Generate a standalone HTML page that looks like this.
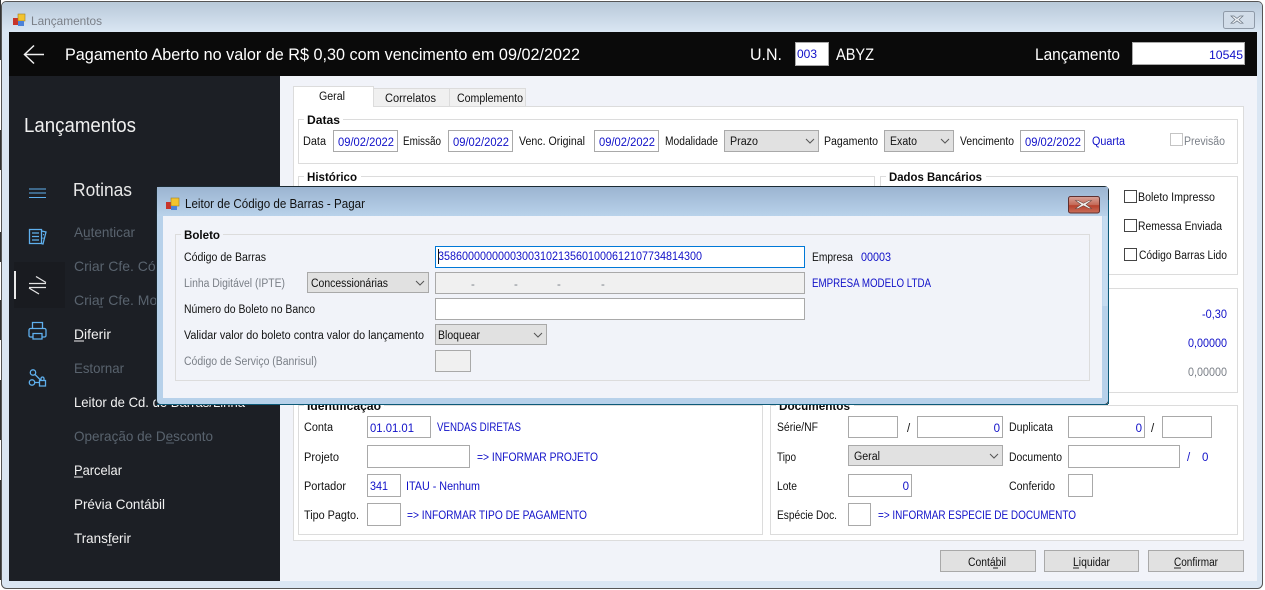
<!DOCTYPE html>
<html lang="pt-BR"><head><meta charset="utf-8"><title>Lançamentos</title>
<style>
html,body{margin:0;padding:0;width:1265px;height:590px;overflow:hidden;background:#fff}
svg{display:block}
text{font-family:"Liberation Sans",sans-serif;font-size:11.5px;fill:#111;white-space:pre}
.b{fill:#1010c8}
.g{fill:#7a7f87}
.l{font-weight:bold;font-size:12px;fill:#0a0a0a}
.w{fill:#f2f2f2;font-size:14px}
.d{fill:#59636e;font-size:14px}
.h{fill:#fff;font-size:16.5px}
.f{fill:#fff;stroke:#a9a9a9;stroke-width:1}
.c{fill:#e1e1e1;stroke:#a9a9a9;stroke-width:1}
.gb{fill:none;stroke:#dcdcdc;stroke-width:1}
.ic{fill:none;stroke:#5fb0ee;stroke-width:1.3}
.ar{fill:none;stroke:#555;stroke-width:1}
</style></head><body>
<svg width="1265" height="590" viewBox="0 0 1265 590" xmlns="http://www.w3.org/2000/svg">
<defs>
<linearGradient id="tg" x1="0" y1="0" x2="0" y2="1"><stop offset="0" stop-color="#b8c9d9"/><stop offset="1" stop-color="#dae6f3"/></linearGradient>
<linearGradient id="dg" x1="0" y1="0" x2="0" y2="1"><stop offset="0" stop-color="#9bb4d1"/><stop offset="1" stop-color="#b9d2ea"/></linearGradient>
<linearGradient id="rg" x1="0" y1="0" x2="0" y2="1"><stop offset="0" stop-color="#d9a49b"/><stop offset=".5" stop-color="#c46a58"/><stop offset=".55" stop-color="#b8402c"/><stop offset="1" stop-color="#c9705c"/></linearGradient>
</defs>
<rect width="1265" height="590" fill="#fff"/>
<path d="M0.500 0v60M0.500 130v40M0.500 232v30M0.500 300v40M0.500 380v60M0.500 480v100" stroke="#333"/>
<!-- main window -->
<rect x="1.500" y="1.500" width="1261" height="587" rx="5" fill="#dae6f3" stroke="#555"/>
<rect x="2" y="2" width="1260" height="30" rx="4" fill="url(#tg)"/>
<g><rect x="13" y="18" width="5" height="7" fill="#c8352b"/><rect x="18" y="14" width="7" height="7" fill="#f2c32e" stroke="#a08020" stroke-width=".6"/><rect x="18" y="21" width="6" height="5" fill="#4c82d8"/></g>
<text x="31" y="25" class="g" textLength="71" lengthAdjust="spacingAndGlyphs" style="font-size:12px">Lançamentos</text>
<rect x="1223.500" y="11.500" width="31" height="17" rx="2" fill="#d2dde9" stroke="#8f9aa8"/>
<path d="M1234 16l3 2.400 3-2.400h3l-4 3.600 4 3.600h-3l-3-2.400-3 2.400h-3l4-3.600-4-3.600z" fill="#eef2f6" stroke="#6a7480" stroke-width=".7"/>
<!-- client -->
<rect x="9" y="76" width="1248" height="505" fill="#f1f3f9"/>
<rect x="9" y="32" width="1248" height="44" fill="#0a0a0a"/>
<path d="M25 54.500h19M34 45.500l-9.500 9 9.500 9" fill="none" stroke="#f0f0f0" stroke-width="1.500"/>
<text x="65" y="60" class="h" textLength="515" lengthAdjust="spacingAndGlyphs">Pagamento Aberto no valor de R$ 0,30 com vencimento em 09/02/2022</text>
<text x="750" y="60" class="h" textLength="32" lengthAdjust="spacingAndGlyphs">U.N.</text>
<rect x="795.500" y="42.500" width="33" height="23" fill="#fff" stroke="#a9a9a9"/>
<text x="797" y="58" class="b" style="font-size:12px" textLength="20" lengthAdjust="spacingAndGlyphs">003</text>
<text x="836" y="60" class="h" textLength="38" lengthAdjust="spacingAndGlyphs">ABYZ</text>
<text x="1035" y="60" class="h" textLength="85" lengthAdjust="spacingAndGlyphs">Lançamento</text>
<rect x="1132.500" y="42.500" width="112" height="22" fill="#fff" stroke="#a9a9a9"/>
<text x="1243" y="59" class="b" text-anchor="end" style="font-size:12px" textLength="34" lengthAdjust="spacingAndGlyphs">10545</text>
<!-- sidebar -->
<rect x="9" y="76" width="271" height="505" fill="#1c1f25"/>
<text x="24" y="132" textLength="112" lengthAdjust="spacingAndGlyphs" style="font-size:20.500px;fill:#f0f0f0">Lançamentos</text>
<text x="73" y="196" textLength="59" lengthAdjust="spacingAndGlyphs" style="font-size:18.500px;fill:#e8e8e8">Rotinas</text>
<path d="M29 189h17M29 193h17M29 197.500h17" fill="none" stroke="#5fb0ee" stroke-width="1"/>
<path class="ic" d="M29.500 229.500h12v14h-12zM32 233h7M32 236.500h7M32 240h7M41.500 231l4.500 1-3 12-2-.500M43 234.500l1 .3M42.500 238l1 .3"/>
<rect x="14" y="262" width="51" height="46" fill="#191b20"/>
<rect x="14" y="271" width="2" height="28" fill="#e8e8e8"/>
<path d="M29 283.500h17M29 287.500h17M36 276.500l10 6M29 288l10 6" fill="none" stroke="#e4e4e4" stroke-width="1.300"/>
<path class="ic" d="M32.500 328.500v-6h10v6M33 337h-2.500a1.500 1.500 0 0 1-1.500-1.500v-5.500a1.500 1.500 0 0 1 1.500-1.500h14a1.500 1.500 0 0 1 1.500 1.500v5.500a1.500 1.500 0 0 1-1.500 1.500h-2.500M33 333.500h9v5.500h-9z"/>
<circle class="ic" cx="33" cy="372.500" r="2.700"/>
<circle class="ic" cx="32" cy="382.500" r="2.700"/>
<path class="ic" d="M35 374.500l6 6M34.700 382.500h4.800M39.500 380.500h6v5.500h-6zM41 380.500v-2a1.500 1.500 0 0 1 3 0v2"/>
<text x="74" y="237" class="d" textLength="61" lengthAdjust="spacingAndGlyphs">Autenticar</text><path d="M84 239h7" stroke="#59636e"/>
<text x="74" y="271" class="d">Criar Cfe. Código</text>
<text x="74" y="305" class="d">Criar Cfe. Modelo</text><path d="M99 307h4" stroke="#59636e"/>
<text x="74" y="339" class="w" textLength="37" lengthAdjust="spacingAndGlyphs">Diferir</text><path d="M74 341h10" stroke="#f2f2f2"/>
<text x="74" y="373" class="d" textLength="50" lengthAdjust="spacingAndGlyphs">Estornar</text>
<text x="74" y="407" class="w" textLength="171" lengthAdjust="spacingAndGlyphs">Leitor de Cd. de Barras/Linha</text>
<text x="74" y="441" class="d" textLength="139" lengthAdjust="spacingAndGlyphs">Operação de Desconto</text><path d="M166 443h8" stroke="#59636e"/>
<text x="74" y="475" class="w" textLength="48" lengthAdjust="spacingAndGlyphs">Parcelar</text><path d="M74 477h9" stroke="#f2f2f2"/>
<text x="74" y="509" class="w" textLength="91" lengthAdjust="spacingAndGlyphs">Prévia Contábil</text>
<text x="74" y="543" class="w" textLength="57" lengthAdjust="spacingAndGlyphs">Transferir</text><path d="M107 545h5" stroke="#f2f2f2"/>
<!-- tabs -->
<rect x="293.500" y="106.500" width="950" height="434" fill="#fff" stroke="#dcdcdc"/>
<rect x="373.500" y="88.500" width="76" height="18" fill="#f0f0f0" stroke="#dcdcdc"/>
<rect x="449.500" y="88.500" width="76" height="18" fill="#f0f0f0" stroke="#dcdcdc"/>
<path d="M293.500 107v-20.500h80V107" fill="#fff" stroke="#dcdcdc"/>
<rect x="294" y="104" width="79" height="4" fill="#fff"/>
<text x="319" y="100" textLength="26" lengthAdjust="spacingAndGlyphs">Geral</text>
<text x="385" y="102" textLength="51" lengthAdjust="spacingAndGlyphs">Correlatos</text>
<text x="457" y="102" textLength="66" lengthAdjust="spacingAndGlyphs">Complemento</text>
<!-- Datas -->
<rect class="gb" x="298.500" y="119.500" width="939" height="44"/>
<rect x="304" y="114" width="39" height="10" fill="#fff"/>
<text x="307" y="124" class="l" textLength="33" lengthAdjust="spacingAndGlyphs">Datas</text>
<text x="303" y="145" textLength="23" lengthAdjust="spacingAndGlyphs">Data</text>
<rect class="f" x="333.500" y="130.500" width="64" height="21"/>
<text x="338" y="146" class="b" textLength="56" lengthAdjust="spacingAndGlyphs">09/02/2022</text>
<text x="403" y="145" textLength="38" lengthAdjust="spacingAndGlyphs">Emissão</text>
<rect class="f" x="448.500" y="130.500" width="64" height="21"/>
<text x="453" y="146" class="b" textLength="56" lengthAdjust="spacingAndGlyphs">09/02/2022</text>
<text x="519" y="145" textLength="66" lengthAdjust="spacingAndGlyphs">Venc. Original</text>
<rect class="f" x="594.500" y="130.500" width="64" height="21"/>
<text x="599" y="146" class="b" textLength="56" lengthAdjust="spacingAndGlyphs">09/02/2022</text>
<text x="665" y="145" textLength="53" lengthAdjust="spacingAndGlyphs">Modalidade</text>
<rect class="c" x="724.500" y="130.500" width="94" height="21"/>
<text x="730" y="145" textLength="28" lengthAdjust="spacingAndGlyphs">Prazo</text>
<path class="ar" d="M806 139l4 4 4-4"/>
<text x="824" y="145" textLength="54" lengthAdjust="spacingAndGlyphs">Pagamento</text>
<rect class="c" x="884.500" y="130.500" width="69" height="21"/>
<text x="890" y="145" textLength="27" lengthAdjust="spacingAndGlyphs">Exato</text>
<path class="ar" d="M941 139l4 4 4-4"/>
<text x="960" y="145" textLength="54" lengthAdjust="spacingAndGlyphs">Vencimento</text>
<rect class="f" x="1020.500" y="130.500" width="64" height="21"/>
<text x="1025" y="146" class="b" textLength="56" lengthAdjust="spacingAndGlyphs">09/02/2022</text>
<text x="1092" y="145" class="b" textLength="33" lengthAdjust="spacingAndGlyphs">Quarta</text>
<rect x="1170.500" y="133.500" width="12" height="12" fill="#fff" stroke="#c4c4c4"/>
<text x="1184" y="145" class="g" textLength="41" lengthAdjust="spacingAndGlyphs">Previsão</text>
<!-- Historico / Dados Bancarios -->
<rect class="gb" x="298.500" y="176.500" width="576" height="98"/>
<rect x="304" y="171" width="57" height="10" fill="#fff"/>
<text x="307" y="181" class="l" textLength="50" lengthAdjust="spacingAndGlyphs">Histórico</text>
<rect class="gb" x="880.500" y="176.500" width="357" height="98"/>
<rect x="886" y="171" width="100" height="10" fill="#fff"/>
<text x="889" y="181" class="l" textLength="93" lengthAdjust="spacingAndGlyphs">Dados Bancários</text>
<rect x="1124.500" y="190.500" width="12" height="12" fill="#fff" stroke="#444"/>
<text x="1138" y="201" textLength="77" lengthAdjust="spacingAndGlyphs">Boleto Impresso</text>
<rect x="1124.500" y="219.500" width="12" height="12" fill="#fff" stroke="#444"/>
<text x="1138" y="230" textLength="84" lengthAdjust="spacingAndGlyphs">Remessa Enviada</text>
<rect x="1124.500" y="248.500" width="12" height="12" fill="#fff" stroke="#444"/>
<text x="1139" y="259" textLength="88" lengthAdjust="spacingAndGlyphs">Código Barras Lido</text>
<rect class="gb" x="880.500" y="288.500" width="357" height="104"/>
<text x="1227" y="318" class="b" text-anchor="end" textLength="25" lengthAdjust="spacingAndGlyphs">-0,30</text>
<text x="1227" y="347" class="b" text-anchor="end" textLength="39" lengthAdjust="spacingAndGlyphs">0,00000</text>
<text x="1227" y="376" class="g" text-anchor="end" textLength="39" lengthAdjust="spacingAndGlyphs">0,00000</text>
<!-- Identificacao -->
<rect class="gb" x="298.500" y="405.500" width="464" height="129"/>
<rect x="304" y="400" width="80" height="10" fill="#fff"/>
<text x="307" y="410" class="l" textLength="74" lengthAdjust="spacingAndGlyphs">Identificação</text>
<text x="304" y="431" textLength="29" lengthAdjust="spacingAndGlyphs">Conta</text>
<rect class="f" x="367.500" y="416.500" width="63" height="21"/>
<text x="370" y="432" class="b" textLength="44" lengthAdjust="spacingAndGlyphs">01.01.01</text>
<text x="437" y="431" class="b" textLength="84" lengthAdjust="spacingAndGlyphs">VENDAS DIRETAS</text>
<text x="304" y="461" textLength="35" lengthAdjust="spacingAndGlyphs">Projeto</text>
<rect class="f" x="367.500" y="445.500" width="102" height="22"/>
<text x="477" y="461" class="b" textLength="121" lengthAdjust="spacingAndGlyphs">=&gt; INFORMAR PROJETO</text>
<text x="304" y="490" textLength="42" lengthAdjust="spacingAndGlyphs">Portador</text>
<rect class="f" x="367.500" y="474.500" width="33" height="22"/>
<text x="370" y="490" class="b" textLength="18" lengthAdjust="spacingAndGlyphs">341</text>
<text x="406" y="490" class="b" textLength="74" lengthAdjust="spacingAndGlyphs">ITAU - Nenhum</text>
<text x="304" y="519" textLength="55" lengthAdjust="spacingAndGlyphs">Tipo Pagto.</text>
<rect class="f" x="367.500" y="503.500" width="33" height="22"/>
<text x="407" y="519" class="b" textLength="180" lengthAdjust="spacingAndGlyphs">=&gt; INFORMAR TIPO DE PAGAMENTO</text>
<!-- Documentos -->
<rect class="gb" x="770.500" y="405.500" width="467" height="129"/>
<rect x="776" y="400" width="78" height="10" fill="#fff"/>
<text x="779" y="410" class="l" textLength="71" lengthAdjust="spacingAndGlyphs">Documentos</text>
<text x="777" y="431" textLength="41" lengthAdjust="spacingAndGlyphs">Série/NF</text>
<rect class="f" x="848.500" y="416.500" width="49" height="21"/>
<text x="907" y="432">/</text>
<rect class="f" x="917.500" y="416.500" width="85" height="21"/>
<text x="1000" y="432" class="b" text-anchor="end">0</text>
<text x="1009" y="431" textLength="44" lengthAdjust="spacingAndGlyphs">Duplicata</text>
<rect class="f" x="1068.500" y="416.500" width="76" height="21"/>
<text x="1142" y="432" class="b" text-anchor="end">0</text>
<text x="1151" y="432">/</text>
<rect class="f" x="1162.500" y="416.500" width="49" height="21"/>
<text x="777" y="461" textLength="19" lengthAdjust="spacingAndGlyphs">Tipo</text>
<rect class="c" x="848.500" y="445.500" width="154" height="20"/>
<text x="854" y="460" textLength="26" lengthAdjust="spacingAndGlyphs">Geral</text>
<path class="ar" d="M990 454l4 4 4-4"/>
<text x="1009" y="461" textLength="53" lengthAdjust="spacingAndGlyphs">Documento</text>
<rect class="f" x="1068.500" y="445.500" width="111" height="22"/>
<text x="1187" y="461" class="b">/</text>
<text x="1202" y="461" class="b">0</text>
<text x="777" y="490" textLength="20" lengthAdjust="spacingAndGlyphs">Lote</text>
<rect class="f" x="848.500" y="474.500" width="63" height="22"/>
<text x="909" y="490" class="b" text-anchor="end">0</text>
<text x="1009" y="490" textLength="46" lengthAdjust="spacingAndGlyphs">Conferido</text>
<rect class="f" x="1068.500" y="474.500" width="24" height="22"/>
<text x="777" y="519" textLength="60" lengthAdjust="spacingAndGlyphs">Espécie Doc.</text>
<rect class="f" x="848.500" y="503.500" width="22" height="22"/>
<text x="878" y="519" class="b" textLength="198" lengthAdjust="spacingAndGlyphs">=&gt; INFORMAR ESPECIE DE DOCUMENTO</text>
<!-- buttons -->
<rect class="c" x="940.500" y="550.500" width="95" height="21"/>
<text x="968" y="566" textLength="38" lengthAdjust="spacingAndGlyphs">Contábil</text><path d="M993 568h5" stroke="#222"/>
<rect class="c" x="1044.500" y="550.500" width="94" height="21"/>
<text x="1073" y="566" textLength="37" lengthAdjust="spacingAndGlyphs">Liquidar</text><path d="M1073 568h6" stroke="#222"/>
<rect class="c" x="1148.500" y="550.500" width="95" height="21"/>
<text x="1174" y="566" textLength="44" lengthAdjust="spacingAndGlyphs">Confirmar</text><path d="M1174 568h7" stroke="#222"/>
<!-- dialog -->
<rect x="156.500" y="186.500" width="952" height="218" rx="4" fill="#b7d1ea" stroke="#1b2a33"/>
<path d="M157 404.500h951M1108.500 200v204" stroke="#0d5a78" fill="none"/>
<path d="M157 187h951v29H157z" fill="url(#dg)"/>
<rect x="163" y="216" width="939" height="182" fill="#f1f3f9"/>
<rect x="1102.500" y="216" width="5" height="90" fill="#c6dcf0"/>
<g><rect x="166" y="202" width="5" height="7" fill="#c8352b"/><rect x="171" y="198" width="8" height="8" fill="#f2c32e" stroke="#a08020" stroke-width=".6"/><rect x="171" y="206" width="6" height="4" fill="#4c82d8"/></g>
<text x="185" y="208" textLength="180" lengthAdjust="spacingAndGlyphs" style="font-size:12.500px">Leitor de Código de Barras - Pagar</text>
<rect x="1068.500" y="196.500" width="31" height="16.500" rx="2" fill="url(#rg)" stroke="#5e3030"/>
<path d="M1078 200.500l5.500 2.800 5.500-2.800h2.500l-5.500 4 5.500 4h-2.500l-5.500-2.800-5.500 2.800h-2.500l5.500-4-5.500-4z" fill="#f4f0ee" stroke="#6a4a44" stroke-width=".6"/>
<rect class="gb" x="175.500" y="234.500" width="914" height="146"/>
<rect x="181" y="229" width="42" height="10" fill="#f1f3f9"/>
<text x="184" y="239" class="l" textLength="36" lengthAdjust="spacingAndGlyphs">Boleto</text>
<text x="184" y="261" textLength="82" lengthAdjust="spacingAndGlyphs">Código de Barras</text>
<rect x="435.500" y="246.500" width="369" height="21" fill="#fff" stroke="#0078d7"/>
<text x="438" y="260" class="b" textLength="264" lengthAdjust="spacingAndGlyphs">35860000000003003102135601000612107734814300</text>
<path d="M438.500 249v15" stroke="#111"/>
<text x="812" y="261" textLength="41" lengthAdjust="spacingAndGlyphs">Empresa</text>
<text x="861" y="261" class="b" textLength="30" lengthAdjust="spacingAndGlyphs">00003</text>
<text x="184" y="287" class="g" textLength="101" lengthAdjust="spacingAndGlyphs">Linha Digitável (IPTE)</text>
<rect class="c" x="307.500" y="272.500" width="121" height="20"/>
<text x="311" y="287" textLength="77" lengthAdjust="spacingAndGlyphs">Concessionárias</text>
<path class="ar" d="M416 281l4 4 4-4"/>
<rect x="435.500" y="272.500" width="369" height="21" fill="#f0f0f0" stroke="#a9a9a9"/>
<text x="471" y="288" class="g">-</text><text x="514" y="288" class="g">-</text><text x="557" y="288" class="g">-</text><text x="601" y="288" class="g">-</text>
<text x="812" y="287" class="b" textLength="119" lengthAdjust="spacingAndGlyphs">EMPRESA MODELO LTDA</text>
<text x="184" y="313" textLength="131" lengthAdjust="spacingAndGlyphs">Número do Boleto no Banco</text>
<rect class="f" x="435.500" y="298.500" width="369" height="21"/>
<text x="184" y="339" textLength="240" lengthAdjust="spacingAndGlyphs">Validar valor do boleto contra valor do lançamento</text>
<rect class="c" x="435.500" y="324.500" width="111" height="20"/>
<text x="438" y="339" textLength="42" lengthAdjust="spacingAndGlyphs">Bloquear</text>
<path class="ar" d="M534 333l4 4 4-4"/>
<text x="184" y="365" class="g" textLength="133" lengthAdjust="spacingAndGlyphs">Código de Serviço (Banrisul)</text>
<rect x="435.500" y="350.500" width="35" height="21" fill="#f0f0f0" stroke="#a9a9a9"/>
</svg>
</body></html>
